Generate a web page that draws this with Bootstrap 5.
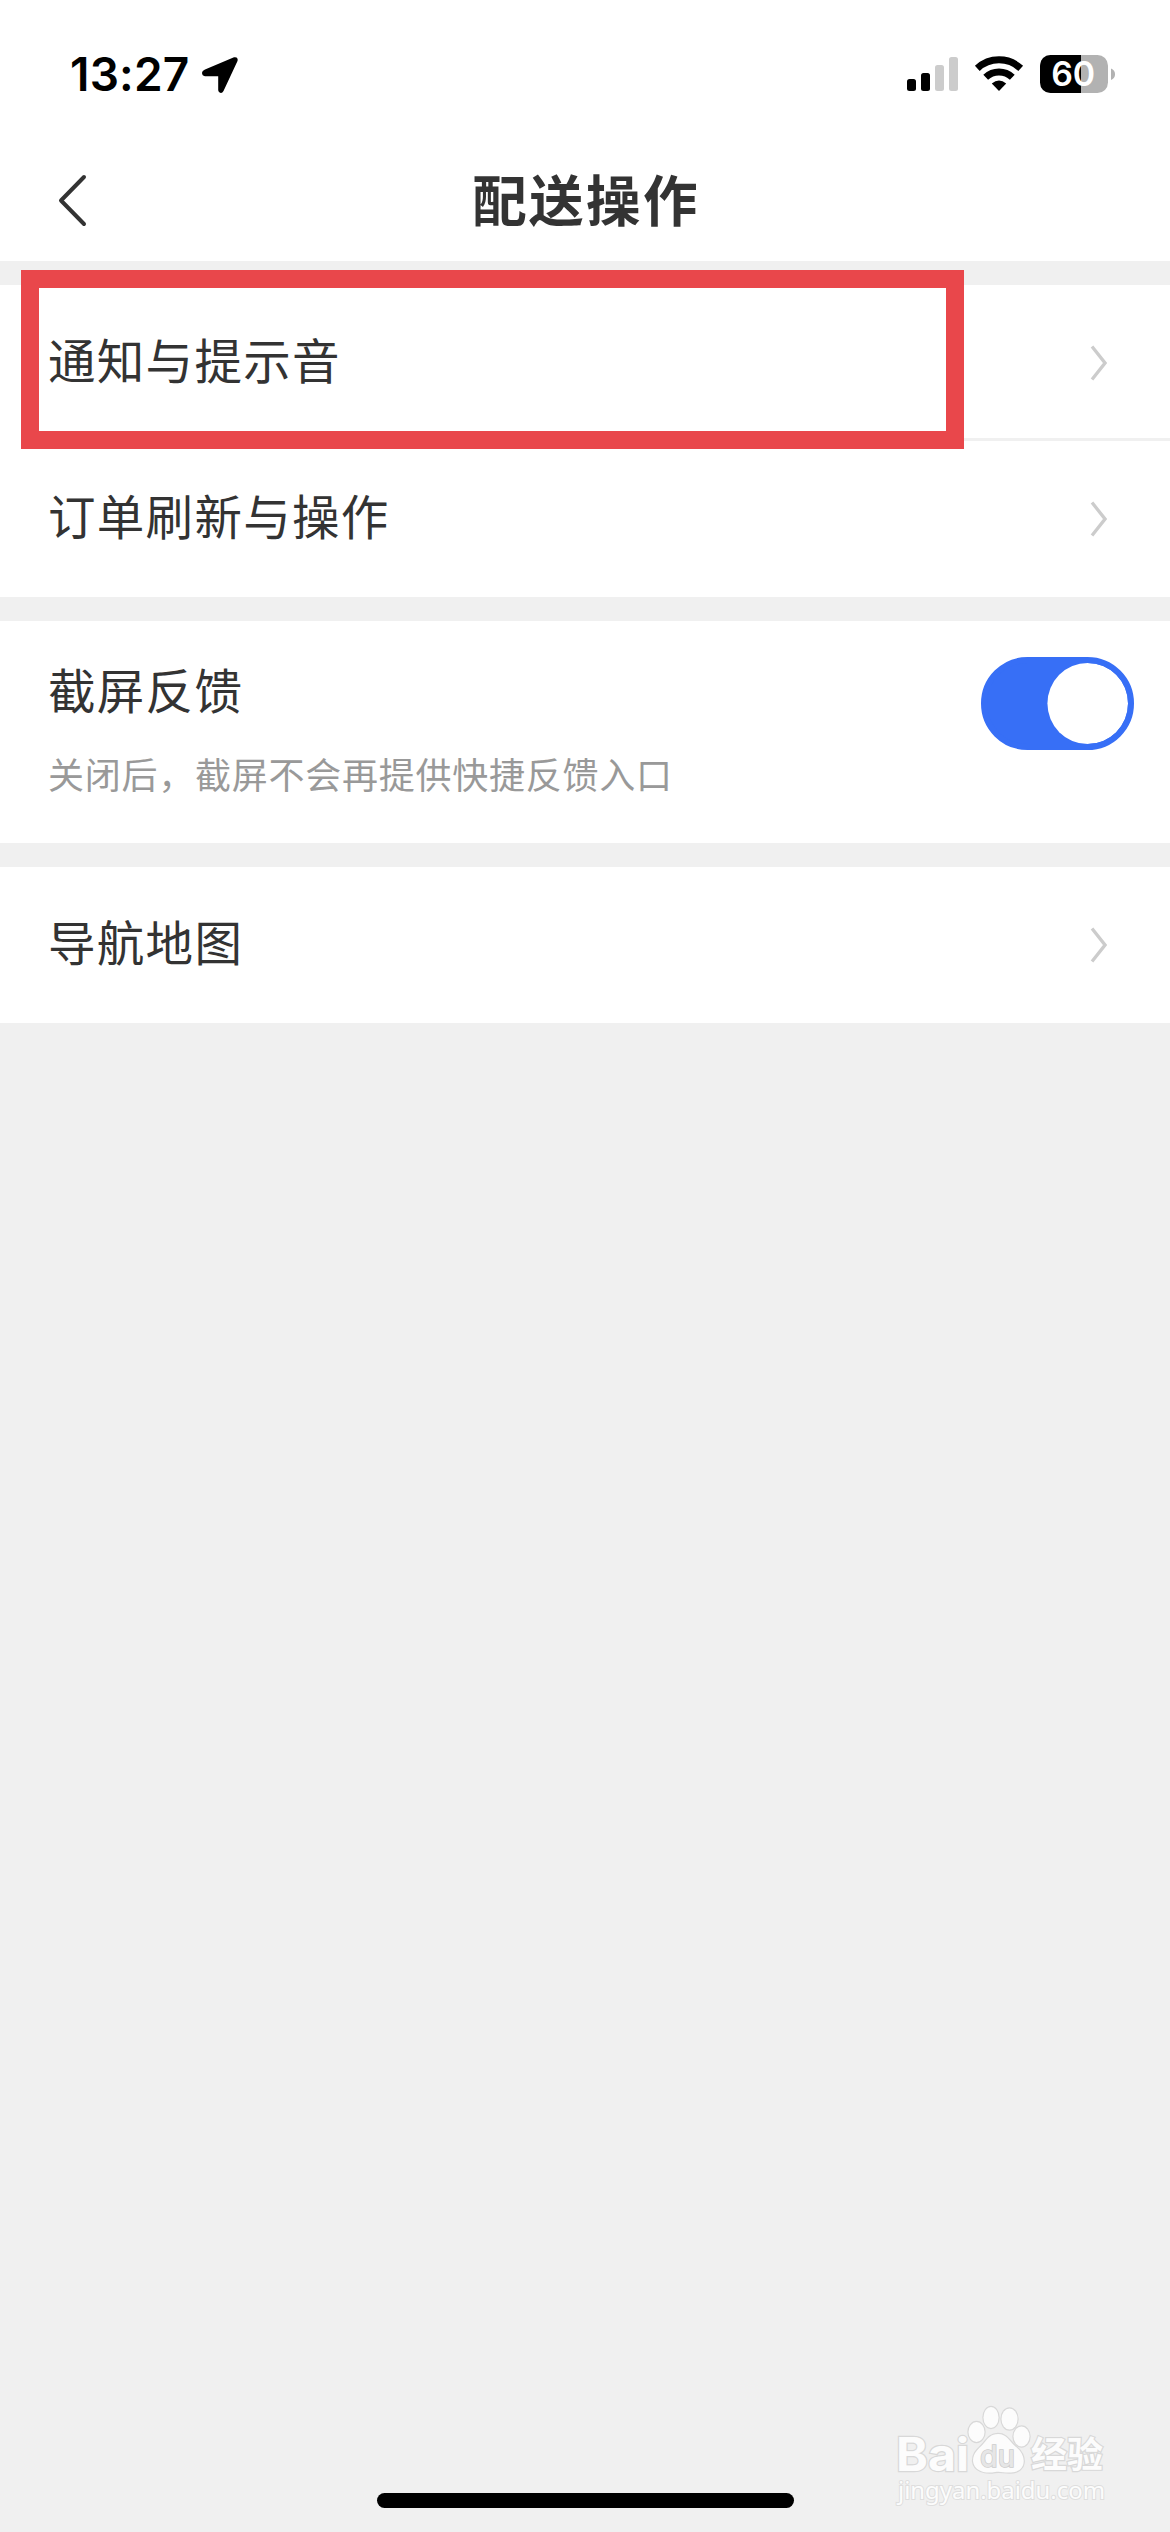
<!DOCTYPE html>
<html lang="zh-CN">
<head>
<meta charset="utf-8">
<meta name="viewport" content="width=device-width, initial-scale=1">
<title>配送操作</title>
<link href="https://cdn.jsdelivr.net/npm/bootstrap@5.3.0/dist/css/bootstrap.min.css" rel="stylesheet">
<style>
body{background:#f0f0f0;color:#333;font-family:"Noto Sans CJK SC",sans-serif}
.screen{width:1170px;height:2532px;overflow:hidden}
.status-bar{height:141px;padding:55px 55px 0 70px}
.clock{font:600 46px/38px Inter,sans-serif;color:#000;letter-spacing:.2px;width:132px}
.indicators{margin-top:-10px}
.title-bar{height:120px;padding-left:58px;padding-right:58px}
.title-bar h1{font-size:54.5px;line-height:80px;letter-spacing:2.4px;font-weight:700;padding-bottom:6px}
.sections{gap:24px;padding-top:24px}
.setting{height:156px;padding:0 63px 0 48px;font-size:47.5px;letter-spacing:1.3px;line-height:72px}
.setting span{padding-bottom:8px}
.rule{height:3px;margin-left:48px;background:#f0f0f0}
.feedback{height:222px;padding:36px 36px 0 48px}
.feedback label{font-size:47.5px;letter-spacing:1.3px;line-height:72px;margin-top:-4px}
.hint{font-size:36px;line-height:54px;letter-spacing:.75px;color:#999;margin-top:21px}
.form-switch .form-check-input.toggle{width:153px;height:93px;border:6px solid #376ff6;background-color:#376ff6;border-radius:47px;background-size:108px 108px;background-position:right -13.5px center;background-image:url("data:image/svg+xml,%3csvg xmlns='http://www.w3.org/2000/svg' viewBox='-4 -4 8 8'%3e%3ccircle r='3' fill='%23fff'/%3e%3c/svg%3e")}
.marker{left:21px;top:-15px;width:943px;height:179px;border:18px solid #e9474b}
.home-bar{width:417px;height:15px;margin-bottom:24px;background:#000}
.watermark{left:880px;top:2395px}
</style>
<script src="https://cdn.jsdelivr.net/npm/bootstrap@5.3.0/dist/js/bootstrap.bundle.min.js"></script>
</head>
<body>
<div class="screen d-flex flex-column position-relative">
  <header class="bg-white">
    <div class="status-bar d-flex align-items-start">
      <span class="clock">13:27</span>
      <svg width="36" height="38" viewBox="0 0 36 38"><path d="M3 14.500 32 2.300Q36.500 1.500 35.500 6L21.500 36Q19.800 39 17.300 37.300 16.200 36.500 16.200 35V21.200H3Q0 20.700 0 17.700 0 15.700 3 14.500Z"/></svg>
      <div class="indicators d-flex ms-auto">
        <svg width="208" height="58" viewBox="907 45 208 58">
          <rect x="907" y="79" width="9" height="12" rx="2.500"/><rect x="921" y="73" width="9" height="18" rx="2.500"/>
          <rect x="935" y="65" width="9" height="26" rx="2.500" fill="#ccc"/><rect x="949" y="57" width="9" height="34" rx="2.500" fill="#ccc"/>
          <g fill="none" stroke="#000" stroke-width="7"><path d="M977.300 68.400A31.800 31.800 0 0 1 1020.700 68.400"/><path d="M985.700 77.200A19.500 19.500 0 0 1 1012.300 77.200"/></g>
          <path d="M999 91 991.800 83.500Q999 77.500 1006.200 83.500Z"/>
          <clipPath id="charge"><rect x="1040" y="55" width="68" height="38" rx="10.500"/></clipPath>
          <g clip-path="url(#charge)"><path fill="#b2b2b2" d="M1040 55h68v38h-68z"/><path d="M1040 55h41v38h-41z"/></g>
          <path fill="#b2b2b2" d="M1111 68.500Q1115 70 1115 74.200T1111 80Z"/>
          <text x="1073.200" y="86.300" text-anchor="middle" font-family="Inter,sans-serif" font-weight="600" font-size="34" textLength="44" lengthAdjust="spacingAndGlyphs" fill="#fff">60</text>
        </svg>
      </div>
    </div>
    <div class="title-bar d-flex align-items-center">
      <svg width="30" height="54" viewBox="58 175 30 54" fill="none" stroke="#333" stroke-width="4" stroke-linecap="round" stroke-linejoin="round"><path d="M84 178 61 201.500 84 225"/></svg>
      <h1 class="flex-grow-1 text-center mb-0 me-4 pe-1">配送操作</h1>
    </div>
  </header>
  <main class="sections d-flex flex-column">
    <section class="bg-white position-relative">
      <div class="setting d-flex align-items-center justify-content-between"><span>通知与提示音</span>
        <svg width="17" height="36" viewBox="0 0 17 36" fill="none" stroke="#ccc" stroke-width="3.300"><path d="M2 1.500 15 18 2 34.500"/></svg></div>
      <div class="rule" style="margin-top:-3px"></div>
      <div class="setting d-flex align-items-center justify-content-between"><span>订单刷新与操作</span>
        <svg width="17" height="36" viewBox="0 0 17 36" fill="none" stroke="#ccc" stroke-width="3.300"><path d="M2 1.500 15 18 2 34.500"/></svg></div>
      <div class="marker position-absolute"></div>
    </section>
    <section class="feedback bg-white d-flex justify-content-between align-items-start">
      <div><label for="shot" class="d-block">截屏反馈</label><div class="hint">关闭后，截屏不会再提供快捷反馈入口</div></div>
      <div class="form-check form-switch p-0 m-0"><input id="shot" class="form-check-input toggle m-0" type="checkbox" role="switch" checked></div>
    </section>
    <section class="bg-white">
      <div class="setting d-flex align-items-center justify-content-between"><span>导航地图</span>
        <svg width="17" height="36" viewBox="0 0 17 36" fill="none" stroke="#ccc" stroke-width="3.300"><path d="M2 1.500 15 18 2 34.500"/></svg></div>
    </section>
  </main>
  <div class="home-bar rounded-pill mt-auto mx-auto"></div>
  <svg class="watermark position-absolute" width="240" height="120" viewBox="880 2395 240 120" fill="#fcfcfc" stroke="#d8d8d8" stroke-width="2.400" paint-order="stroke">
    <text x="896" y="2471" font-family="Inter,sans-serif" font-weight="700" font-size="46" textLength="73" lengthAdjust="spacingAndGlyphs">Bai</text>
    <ellipse cx="976.500" cy="2432" rx="8" ry="10"/><ellipse cx="991" cy="2417.500" rx="7.500" ry="10.500"/><ellipse cx="1009.500" cy="2419" rx="8" ry="10.500"/><ellipse cx="1021.500" cy="2436.500" rx="8" ry="10"/>
    <path d="M998 2434C1007 2434 1009 2441 1016 2447 1027 2455 1027 2472 1011 2472.500 1004 2473 1001 2471 995 2472 985 2474 974 2471 973 2461 973 2452 979 2449 984 2443 988 2438 991 2434 998 2434Z"/>
    <text x="980" y="2467" font-family="Inter,sans-serif" font-weight="500" font-size="30" fill="#e6e6e6" stroke="#ccc" stroke-width="1.500" textLength="35" lengthAdjust="spacingAndGlyphs">du</text>
    <text x="1031" y="2468" font-family="'Noto Sans CJK SC',sans-serif" font-weight="700" font-size="36">经验</text>
    <text x="898" y="2499" font-family="'Noto Sans',sans-serif" font-size="24" stroke-width="2" stroke="#dedede" textLength="207" lengthAdjust="spacingAndGlyphs">jingyan.baidu.com</text>
  </svg>
</div>
</body>
</html>
